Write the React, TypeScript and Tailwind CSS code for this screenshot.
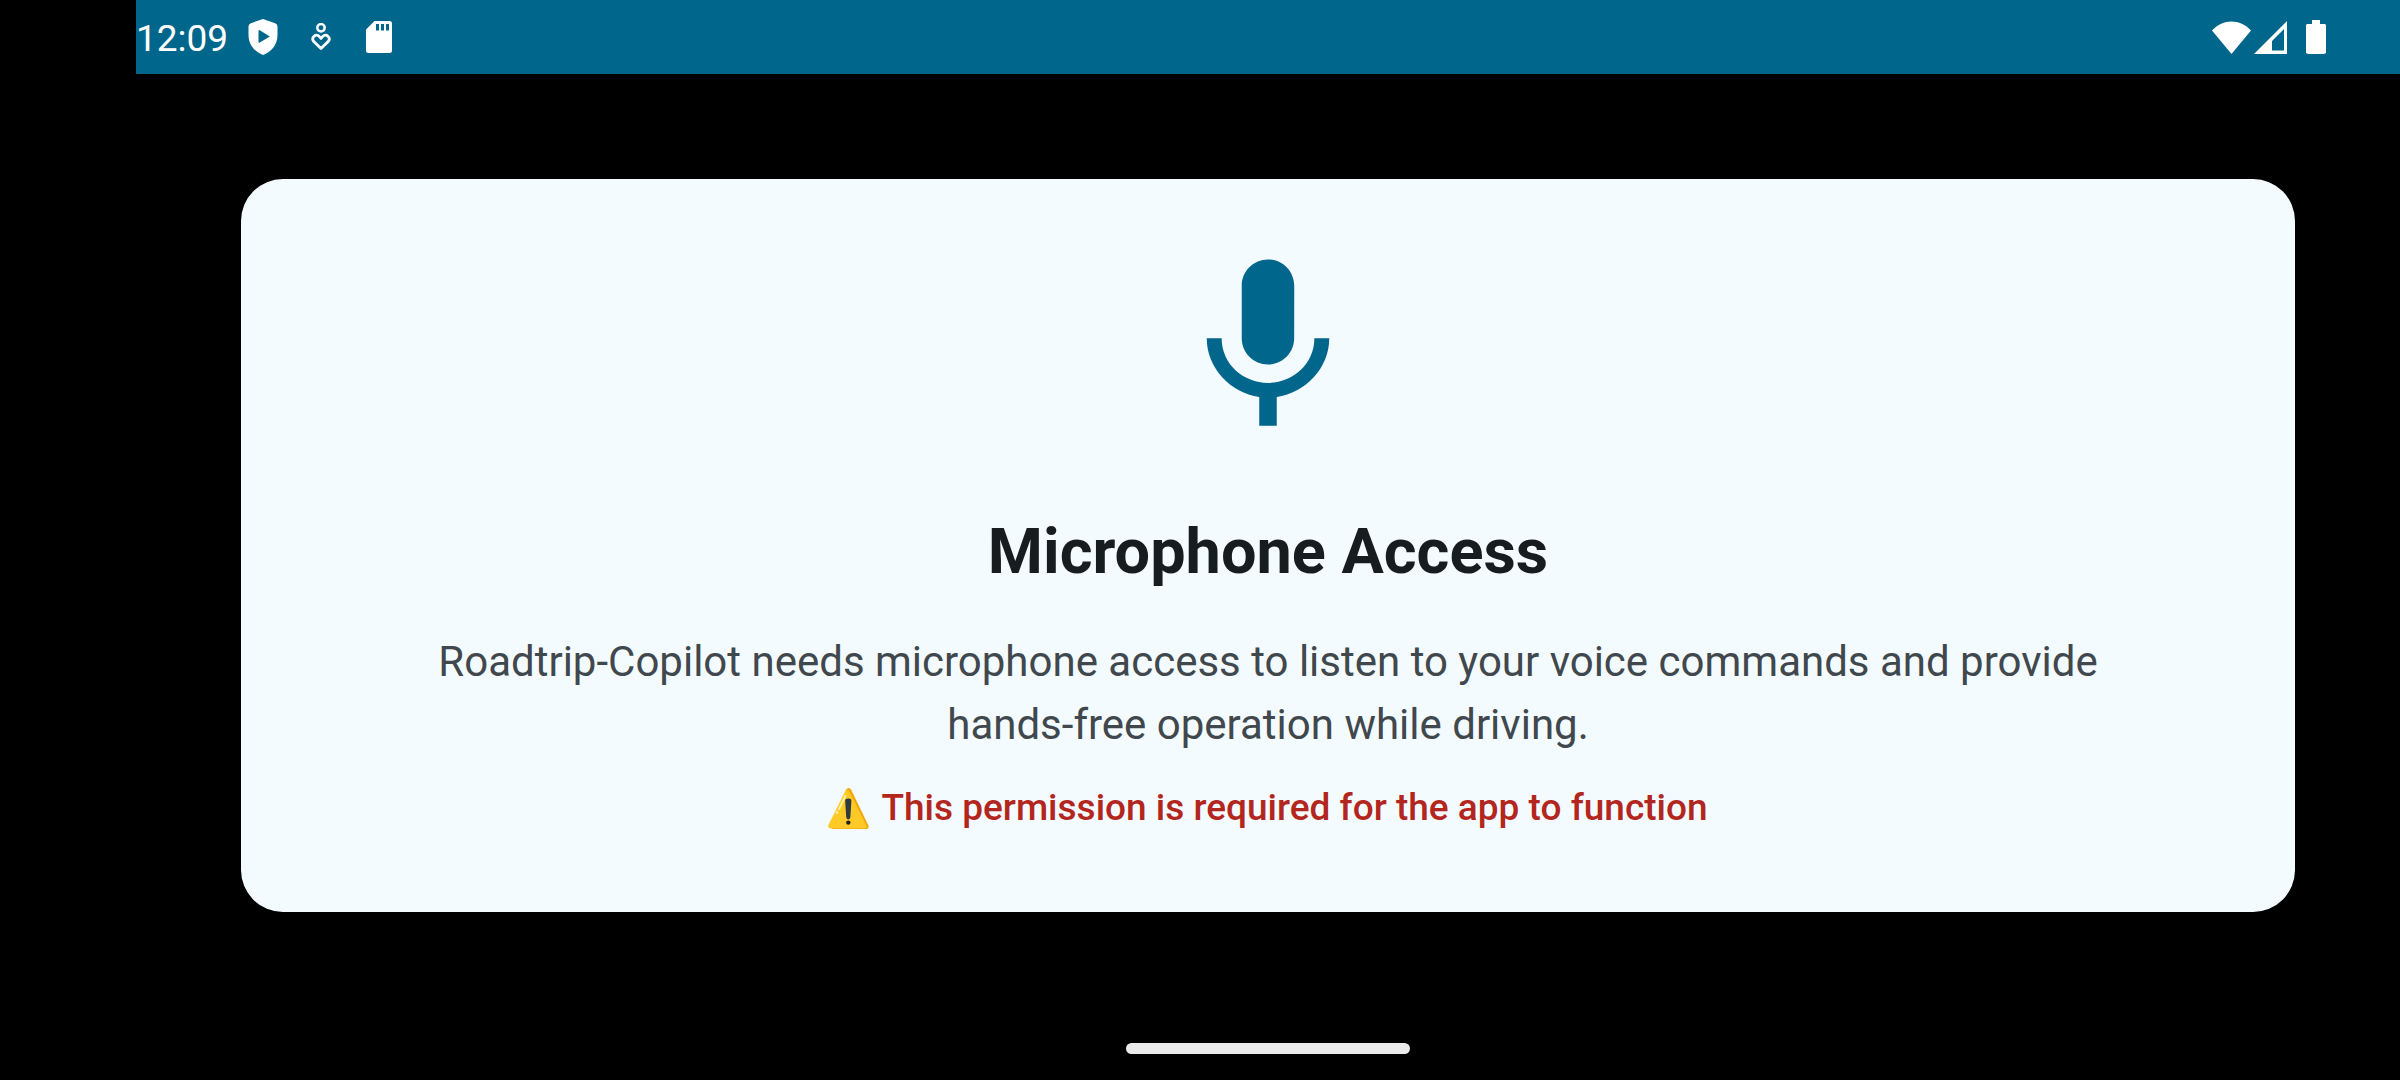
const ink = "fill-white";

function PlayShield() {
  return (
    <svg viewBox="0 0 30 36" className="h-9 w-[30px]" aria-hidden="true">
      <path
        fillRule="evenodd"
        className={ink}
        d="M15 0 L27.2 4.2 Q29.5 5 29.5 7.4 V16 C29.5 26 23 33 15 36 C7 33 .5 26 .5 16 V7.4 Q.5 5 2.8 4.2 Z M10.5 12.2 V22.8 Q10.5 24.2 11.8 23.4 L21.8 17.5 L11.8 11.2 Q10.5 10.6 10.5 12.2 Z"
      />
    </svg>
  );
}

function HeartPerson() {
  return (
    <svg viewBox="0 0 20 28" className="h-7 w-5" aria-hidden="true">
      <circle cx="10" cy="4.8" r="3.7" className="fill-none stroke-white" strokeWidth="2.5" />
      <path
        className="fill-none stroke-white"
        strokeWidth="2.8"
        strokeLinejoin="round"
        d="M10 25.6 L2.8 18.6 C-.4 14.6 5 10 8.2 13.4 L10 15.4 L11.8 13.4 C15 10 20.4 14.6 17.2 18.6 Z"
      />
    </svg>
  );
}

function SdCard() {
  return (
    <svg viewBox="0 0 26 32" className="h-8 w-[26px]" aria-hidden="true">
      <path
        fillRule="evenodd"
        className={ink}
        d="M8.5 0 H23.5 Q26 0 26 2.5 V29.5 Q26 32 23.5 32 H2.5 Q0 32 0 29.5 V8.5 Z M10 3 V9.5 H13 V3 Z M15 3 V9.5 H18 V3 Z M20 3 V9.5 H23 V3 Z"
      />
    </svg>
  );
}

function Wifi() {
  return (
    <svg viewBox="0 0 39 33" className="h-[33px] w-[39px]" aria-hidden="true">
      <path className={ink} d="M19.5 33 L0 9.5 C11 -2.6 28 -2.6 39 9.5 Z" />
    </svg>
  );
}

function Signal() {
  return (
    <svg viewBox="0 0 33 33" className="h-[33px] w-[33px]" aria-hidden="true">
      <path fillRule="evenodd" className={ink} d="M33 0 V33 H0 Z M30 8 L18 20 V29.5 H30 Z" />
    </svg>
  );
}

function Battery() {
  return (
    <svg viewBox="0 0 20 34" className="h-[34px] w-5" aria-hidden="true">
      <path className={ink} d="M6 0 H14 V4 H19 L20 5 V33 L18 34 H2 L0 33 V5 L1 4 H6 Z" />
    </svg>
  );
}

function Microphone() {
  return (
    <svg viewBox="0 0 24 24" className="size-[210px] fill-[#00668b]" aria-hidden="true">
      <path d="M12 14c1.66 0 2.99-1.34 2.99-3L15 5c0-1.66-1.34-3-3-3S9 3.34 9 5v6c0 1.66 1.34 3 3 3zm5.3-3c0 3-2.54 5.1-5.3 5.1S6.7 14 6.7 11H5c0 3.41 2.72 6.23 6 6.72V21h2v-3.28c3.28-.48 6-3.3 6-6.72h-1.7z" />
    </svg>
  );
}

function Warning() {
  return (
    <svg viewBox="0 0 41 41" className="size-[41px]" role="img" aria-label="Warning">
      <path fill="#f2a600" d="M18.2 1.6 Q20.5 -1.6 23 1.6 L40.4 37.4 Q41.6 41 38 41 H4 Z" />
      <path fill="#ffca28" d="M17.6 2.4 Q19.4 .2 21 2.8 L38.4 37.4 Q39.4 40.4 36.4 40.6 H2.6 Q-.6 40.2 .4 37 Z" />
      <path fill="#fff59d" d="M16.6 7.6 Q18.6 6 18 9 L12 21.4 Q9.4 23.4 10.2 20.6 Z" />
      <circle cx="9" cy="24.4" r="1.4" fill="#fff59d" />
      <path fill="#303b40" d="M17.2 13 Q17.2 10.6 20.3 10.6 Q23.4 10.6 23.4 13 L22.4 29 Q22.2 31.4 20.3 31.4 Q18.4 31.4 18.2 29 Z" />
      <circle cx="20.3" cy="34.6" r="2.2" fill="#212121" />
    </svg>
  );
}

export default function App() {
  return (
    <div className="flex min-h-screen flex-col bg-black pl-[136px] font-[Roboto,sans-serif]">
      <header className="flex h-[74px] items-center justify-between bg-[#00668b] pr-[74px] text-white">
        <div className="flex items-center">
          <time className="pt-1 pr-5 text-[37px] leading-[70px]">12:09</time>
          <PlayShield />
          <div className="pr-[35px] pl-[33px]">
            <HeartPerson />
          </div>
          <SdCard />
        </div>
        <div className="flex items-center">
          <Wifi />
          <div className="pr-[19px] pl-[3px]">
            <Signal />
          </div>
          <Battery />
        </div>
      </header>

      <main className="flex flex-1 flex-col px-[105px] pt-[105px]">
        <section className="flex flex-col items-center rounded-[42px] bg-[#f3fbff] px-[84px] pt-[63px] pb-[78px] text-center">
          <Microphone />
          <h1 className="pt-[58px] text-[63px] leading-[84px] font-bold text-[#171c1f]">Microphone Access</h1>
          <p className="pt-9 text-[42px] leading-[63px] text-[#41484d]">
            Roadtrip-Copilot needs microphone access to listen to your voice commands and provide
            <br />
            hands-free operation while driving.
          </p>
          <p className="flex items-center gap-3 pt-[26px] text-[37px] leading-[52px] font-medium text-[#b3261e]">
            <Warning />
            This permission is required for the app to function
          </p>
        </section>
      </main>

      <footer className="flex justify-center pb-[26px]">
        <div className="h-[11px] w-[284px] rounded-full bg-[#ebebeb]" />
      </footer>
    </div>
  );
}
